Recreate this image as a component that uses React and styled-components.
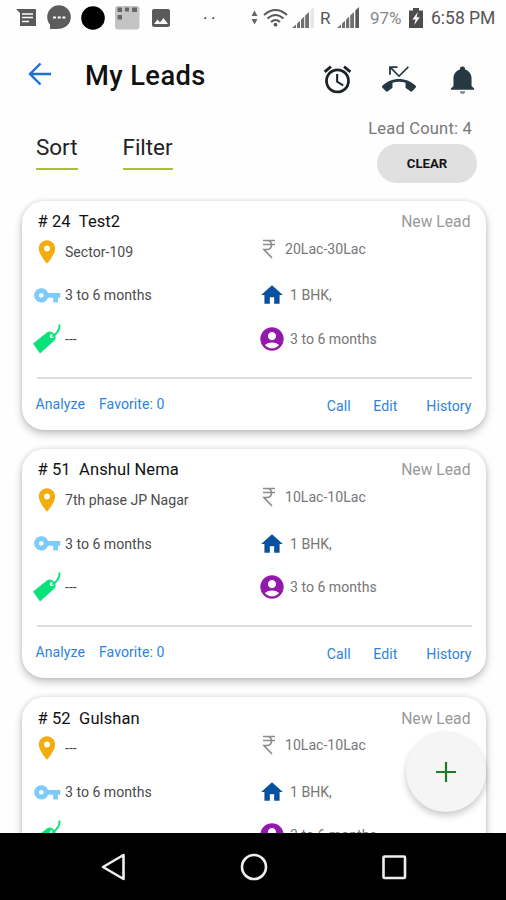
import styled, { createGlobalStyle } from "styled-components";
import {
  MdAccountCircle,
  MdAlarm,
  MdHome,
  MdImage,
  MdLocationOn,
  MdVpnKey,
} from "react-icons/md";

const GlobalStyle = createGlobalStyle`
  * {
    box-sizing: border-box;
  }
  body {
    margin: 0;
    background: #fefefe;
    font-family: Roboto, "Liberation Sans", sans-serif;
  }
  svg {
    display: block;
    flex: none;
  }
  button {
    font-family: inherit;
    border: none;
    padding: 0;
    cursor: pointer;
  }
`;

const Screen = styled.div`
  position: relative;
  display: flex;
  flex-direction: column;
  width: 506px;
  height: 900px;
  overflow: hidden;
  background: #fefefe;
`;

const StatusBar = styled.div`
  display: flex;
  align-items: center;
  flex: none;
  height: 35px;
  padding: 0 10px 0 16px;
  color: #5a5a5a;
`;

const StatusItem = styled.span`
  display: flex;
  flex: none;
  width: ${(props) => props.$width}px;
`;

const StatusText = styled.span`
  flex: none;
  width: ${(props) => props.$width}px;
  font-size: ${(props) => props.$size || 17}px;
  letter-spacing: ${(props) => props.$spacing || 0}px;
  color: ${(props) => props.$color || "#555"};
  white-space: nowrap;
`;

const Header = styled.header`
  display: flex;
  align-items: center;
  flex: none;
  height: 80px;
  padding: 0 28px 0 28px;
`;

const BackButton = styled.button`
  width: 57px;
  height: 24px;
  margin-bottom: 3px;
  background: none;
`;

const Title = styled.h1`
  flex: 1;
  margin: 2px 0 0;
  font-size: 27.3px;
  font-weight: 500;
  letter-spacing: 0.4px;
  line-height: 32px;
  color: #111;
`;

const HeaderIcons = styled.div`
  display: flex;
  align-items: center;
  margin-top: 8px;
  color: #263943;
  svg:nth-child(2) {
    margin: 0 31.5px 0 27.5px;
  }
`;

const Toolbar = styled.div`
  display: flex;
  align-items: flex-start;
  flex: none;
  height: 75px;
  padding: 0 29px 0 36px;
`;

const Tab = styled.button`
  margin: 17px 45px 0 0;
  height: 38px;
  padding-bottom: 6px;
  font-size: 22.5px;
  line-height: 30px;
  text-align: left;
  letter-spacing: -0.05px;
  color: #222;
  background: none;
  border-bottom: 2.5px solid #a9c130;
`;

const Summary = styled.div`
  display: flex;
  flex-direction: column;
  align-items: flex-end;
  margin-left: auto;
`;

const LeadCount = styled.span`
  margin: 4px 5px 5px 0;
  font-size: 16.5px;
  line-height: 20px;
  letter-spacing: 0.2px;
  color: #777;
`;

const ClearButton = styled.button`
  width: 100px;
  height: 39px;
  border-radius: 20px;
  font-size: 13.2px;
  font-weight: 700;
  color: #151515;
  background: #e0e0e0;
`;

const LeadList = styled.main`
  display: flex;
  flex-direction: column;
  flex: 1;
  gap: 19.3px;
  min-height: 0;
  padding: 10.5px 20px 0 21.5px;
  overflow: hidden;
`;

const Card = styled.article`
  flex: none;
  height: 229px;
  padding: 10.5px 14.5px 0 15px;
  border-radius: 22px;
  background: #fff;
  box-shadow: 0 4px 8px rgba(0, 0, 0, 0.22), 0 0 5px rgba(0, 0, 0, 0.12);
`;

const CardHead = styled.div`
  display: flex;
  justify-content: space-between;
  height: 19px;
  padding: 0 1px;
  font-size: 16.5px;
  line-height: 22px;
`;

const LeadName = styled.span`
  letter-spacing: 0.1px;
  color: #111;
  white-space: pre;
`;

const LeadStatus = styled.span`
  font-size: 15.7px;
  color: #999;
`;

const Facts = styled.div`
  display: grid;
  grid-template-columns: 225px 1fr;
  margin-left: -2.5px;
`;

const Fact = styled.div`
  display: flex;
  align-items: center;
  height: 43.5px;
  padding-bottom: ${(props) => (props.$raised ? 6 : 0)}px;
  font-size: 14.1px;
  color: ${(props) => (props.$muted ? "#777" : "#4c4c4c")};
`;

const FactIcon = styled.span`
  display: flex;
  justify-content: center;
  flex: none;
  width: ${(props) => props.$width || 26}px;
  margin-right: ${(props) => props.$gap || 5}px;
  color: ${(props) => props.$color};
`;

const Divider = styled.hr`
  height: 2.5px;
  margin: 16px 0 0;
  border: none;
  background: #dedede;
`;

const Actions = styled.div`
  display: flex;
  justify-content: space-between;
  line-height: 20px;
`;

const ActionGroup = styled.div`
  display: flex;
  align-items: flex-start;
  gap: ${(props) => props.$gap}px;
  margin-left: -1px;
  padding-top: ${(props) => props.$top}px;
`;

const Action = styled.button`
  font-size: 14.1px;
  line-height: 20px;
  letter-spacing: 0.05px;
  margin-right: ${(props) => props.$after || 0}px;
  color: #2f83dc;
  background: none;
`;

const AddButton = styled.button`
  position: absolute;
  right: 20px;
  bottom: 88px;
  display: flex;
  align-items: center;
  justify-content: center;
  width: 80px;
  height: 80px;
  border-radius: 50%;
  background: #f5f5f5;
  box-shadow: 0 4px 7px rgba(0, 0, 0, 0.2), 0 0 3px rgba(0, 0, 0, 0.04);
`;

const NavBar = styled.nav`
  display: flex;
  align-items: center;
  justify-content: space-between;
  flex: none;
  height: 67px;
  padding: 0 98px 0 99px;
  background: #000;
`;

const leads = [
  { id: 24, name: "Test2", place: "Sector-109", budget: "20Lac-30Lac" },
  { id: 51, name: "Anshul Nema", place: "7th phase JP Nagar", budget: "10Lac-10Lac" },
  { id: 52, name: "Gulshan", place: "---", budget: "10Lac-10Lac" },
];

const NotesIcon = () => (
  <svg width="20" height="18" viewBox="0 0 20 18">
    <path d="M0 0H20V17H4V4Z" fill="#5a5a5a" />
    <path d="M6 5H17M6 8.5H17M6 12.5H13" stroke="#fff" strokeWidth="1.6" />
  </svg>
);

const ChatIcon = () => (
  <svg width="24" height="25" viewBox="0 0 24 25">
    <circle cx="12" cy="12" r="11.8" fill="#5c5c5c" />
    <path d="M3 17V24H12Z" fill="#5c5c5c" />
    <path d="M6 12.5H9M10.7 12.5H13.7M15.4 12.5H18.4" stroke="#fff" strokeWidth="2" />
  </svg>
);

const DotIcon = () => (
  <svg width="24" height="24" viewBox="0 0 24 24">
    <circle cx="12" cy="12" r="11.8" fill="#000" />
  </svg>
);

const GridIcon = () => (
  <svg width="25" height="24" viewBox="0 0 25 24">
    <rect x="0" y="0" width="24.5" height="23.5" rx="3" fill="#c4c4c4" />
    <path d="M2.5 1.5h4.5v4.5h-4.5zM10 1.5h4v4h-4zM17 1.5h5v4.5h-5zM2.5 9h4.5v4.5h-4.5z" fill="#666" />
  </svg>
);

const DataArrowsIcon = () => (
  <svg width="7" height="17" viewBox="0 0 7 17">
    <path d="M0.5 7L3.5 1.5L6.5 7ZM0.5 10L3.5 15.5L6.5 10Z" fill="#666" />
  </svg>
);

const WifiIcon = () => (
  <svg width="25" height="18" viewBox="0 0 25 18" fill="none" stroke="#5a5a5a" strokeWidth="2">
    <path d="M1 6Q12.5 -4 24 6M4.5 9.5Q12.5 2.5 20.5 9.5M8 13Q12.5 9 17 13" />
    <circle cx="12.5" cy="15.7" r="1.9" fill="#5a5a5a" stroke="none" />
  </svg>
);

const SignalIcon = ({ weak }) => (
  <svg width="23" height="21" viewBox="0 0 23 21">
    <path d="M0 21L4 17.5V21ZM5 21V16.5L8 13.7V21ZM9 21V12.7L12.2 9.5V21ZM13.2 21V8.5L17 5V21Z" fill="#707070" />
    <path d="M18.3 21V3.6L22 0V21Z" fill={weak ? "#e6e6e6" : "#5a5a5a"} />
  </svg>
);

const BatteryIcon = () => (
  <svg width="14" height="20" viewBox="0 0 14 20">
    <path d="M0 2.5H4V0H10V2.5H14V20H0Z" fill="#4d4d4d" />
    <path d="M8.8 4L3.5 11.5H6.6L5.2 17L10.8 9.3H7.6Z" fill="#fff" />
  </svg>
);

const BackIcon = () => (
  <svg width="24" height="24" viewBox="0 0 24 24" fill="none" stroke="#1b6fd6" strokeWidth="2.4">
    <path d="M23 12H2.5M12.5 1.5L2 12L12.5 22.5" />
  </svg>
);

const MissedCallIcon = () => (
  <svg width="34" height="34" viewBox="0 0 24 24" fill="currentColor">
    <path d="M23.7 16.7C20.7 13.8 16.5 12 12 12S3.3 13.8.3 16.7a1 1 0 0 0 0 1.4l2.5 2.5a1 1 0 0 0 1.4 0c.8-.8 1.7-1.4 2.6-1.9.4-.1.6-.5.6-.9v-3.1a15.4 15.4 0 0 1 9.2 0v3.1c0 .4.2.8.6.9 1 .5 1.9 1.1 2.7 1.9a1 1 0 0 0 1.4 0l2.4-2.5a1 1 0 0 0 0-1.4z" />
    <path d="M6.3 5.1L12 10.8l7-7-.8-.8L12 9.1 7.2 4.3H11V3H5v6h1.3z" />
  </svg>
);

const BellIcon = () => (
  <svg width="31" height="31" viewBox="0 0 24 24" fill="currentColor">
    <path d="M21 19v1H3v-1l2-2v-6c0-3.1 2-5.8 5-6.7V4a2 2 0 0 1 4 0v.3c3 .9 5 3.6 5 6.7v6z" />
    <path d="M14 21a2 2 0 0 1-4 0z" opacity="0.6" />
  </svg>
);

const TagIcon = () => (
  <svg width="28" height="30" viewBox="0 0 28 30">
    <path d="M0 19.5L14 8.5Q16 7 18 7.7L20.5 9.2Q22.5 10.5 22.5 12V15.5L7 29.5Z" fill="#0be27a" />
    <circle cx="18.8" cy="12.3" r="2" fill="#fff" />
    <path d="M18.8 12.5Q27 8.5 26.5 0.5" fill="none" stroke="#0be27a" strokeWidth="1.9" />
  </svg>
);

const RupeeIcon = () => (
  <svg width="14" height="20" viewBox="0 0 14 20" fill="none" stroke="#8c8c8c" strokeWidth="1.7">
    <path d="M1 1.5H13M1 5.5H13M2 1.5H5C11 1.5 11 10.5 5 10.5H2L10 19" />
  </svg>
);

const LeadCard = ({ lead }) => (
  <Card>
    <CardHead>
      <LeadName>{`# ${lead.id}  ${lead.name}`}</LeadName>
      <LeadStatus>New Lead</LeadStatus>
    </CardHead>
    <Facts>
      <Fact>
        <FactIcon $color="#f2ad0c">
          <MdLocationOn size={28} />
        </FactIcon>
        {lead.place}
      </Fact>
      <Fact $muted $raised>
        <FactIcon $width={20} $gap={6}>
          <RupeeIcon />
        </FactIcon>
        {lead.budget}
      </Fact>
      <Fact>
        <FactIcon $color="#7ccbfb">
          <MdVpnKey size={28.5} />
        </FactIcon>
        3 to 6 months
      </Fact>
      <Fact $muted>
        <FactIcon $color="#07529c">
          <MdHome size={26} />
        </FactIcon>
        1 BHK,
      </Fact>
      <Fact>
        <FactIcon>
          <TagIcon />
        </FactIcon>
        ---
      </Fact>
      <Fact $muted>
        <FactIcon $color="#9319ad">
          <MdAccountCircle size={28} />
        </FactIcon>
        3 to 6 months
      </Fact>
    </Facts>
    <Divider />
    <Actions>
      <ActionGroup $gap={14} $top={14.5}>
        <Action>Analyze</Action>
        <Action>Favorite: 0</Action>
      </ActionGroup>
      <ActionGroup $gap={22.5} $top={17}>
        <Action>Call</Action>
        <Action $after={6.5}>Edit</Action>
        <Action>History</Action>
      </ActionGroup>
    </Actions>
  </Card>
);

const App = () => {
  return (
    <Screen>
      <GlobalStyle />
      <StatusBar>
        <StatusItem $width={31}>
          <NotesIcon />
        </StatusItem>
        <StatusItem $width={34}>
          <ChatIcon />
        </StatusItem>
        <StatusItem $width={34}>
          <DotIcon />
        </StatusItem>
        <StatusItem $width={34}>
          <GridIcon />
        </StatusItem>
        <StatusItem $width={54}>
          <MdImage size={24} />
        </StatusItem>
        <StatusText $width={48} $spacing={3.5} $color="#222">
          ··
        </StatusText>
        <StatusItem $width={12}>
          <DataArrowsIcon />
        </StatusItem>
        <StatusItem $width={29}>
          <WifiIcon />
        </StatusItem>
        <StatusItem $width={28}>
          <SignalIcon weak />
        </StatusItem>
        <StatusText $width={17}>R</StatusText>
        <StatusItem $width={33}>
          <SignalIcon />
        </StatusItem>
        <StatusText $width={39} $color="#888">
          97%
        </StatusText>
        <StatusItem $width={22}>
          <BatteryIcon />
        </StatusItem>
        <StatusText $width={65} $size={17.5}>
          6:58 PM
        </StatusText>
      </StatusBar>
      <Header>
        <BackButton>
          <BackIcon />
        </BackButton>
        <Title>My Leads</Title>
        <HeaderIcons>
          <MdAlarm size={33} color="#1c2327" />
          <MissedCallIcon />
          <BellIcon />
        </HeaderIcons>
      </Header>
      <Toolbar>
        <Tab>Sort</Tab>
        <Tab>Filter</Tab>
        <Summary>
          <LeadCount>Lead Count: 4</LeadCount>
          <ClearButton>CLEAR</ClearButton>
        </Summary>
      </Toolbar>
      <LeadList>
        {leads.map((lead) => (
          <LeadCard key={lead.id} lead={lead} />
        ))}
      </LeadList>
      <AddButton>
        <svg width="20" height="20" viewBox="0 0 20 20">
          <path d="M10 0V20M0 10H20" stroke="#237a24" strokeWidth="2.2" />
        </svg>
      </AddButton>
      <NavBar>
        <svg width="28" height="30" viewBox="0 0 28 30">
          <path d="M4 15L24.5 3V27Z" fill="none" stroke="#eee" strokeWidth="2.6" strokeLinejoin="round" />
        </svg>
        <svg width="28" height="28" viewBox="0 0 28 28">
          <circle cx="14" cy="14" r="12" fill="none" stroke="#eee" strokeWidth="2.6" />
        </svg>
        <svg width="28" height="28" viewBox="0 0 28 28">
          <rect x="3.5" y="3.5" width="21.5" height="21.5" rx="1" fill="none" stroke="#eee" strokeWidth="2.6" />
        </svg>
      </NavBar>
    </Screen>
  );
};

export default App;
